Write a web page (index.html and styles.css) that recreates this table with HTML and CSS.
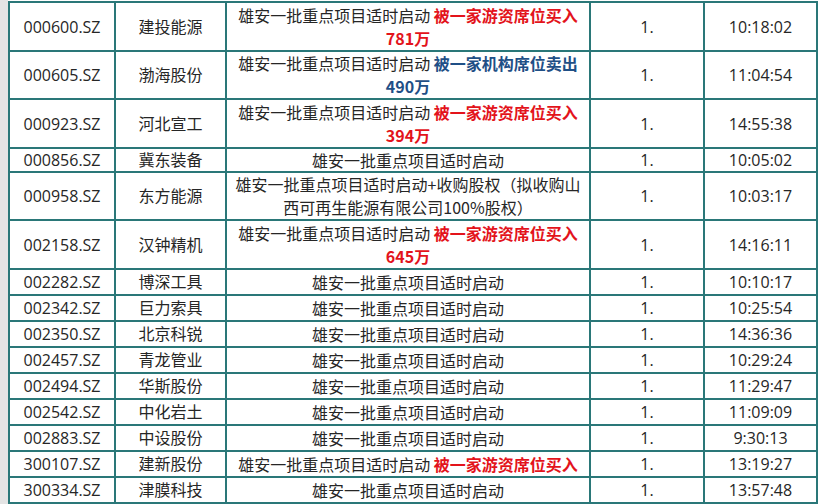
FILE: index.html
```html
<!DOCTYPE html>
<html lang="zh-CN">
<head>
<meta charset="utf-8">
<title>雄安概念股</title>
<link rel="stylesheet" href="styles.css">
</head>
<body>
<div class="page">
<table class="grid">
  <colgroup>
    <col class="c-code"><col class="c-name"><col class="c-reason"><col class="c-num"><col class="c-time">
  </colgroup>
  <tbody>
    <tr class="r2a"><td>000600.SZ</td><td>建投能源</td><td class="reason">雄安一批重点项目适时启动 <b class="buy">被一家游资席位买入</b><br><b class="buy">781万</b></td><td>1.</td><td>10:18:02</td></tr>
    <tr class="r2b"><td>000605.SZ</td><td>渤海股份</td><td class="reason">雄安一批重点项目适时启动 <b class="sell">被一家机构席位卖出</b><br><b class="sell">490万</b></td><td>1.</td><td>11:04:54</td></tr>
    <tr class="r2a"><td>000923.SZ</td><td>河北宣工</td><td class="reason">雄安一批重点项目适时启动 <b class="buy">被一家游资席位买入</b><br><b class="buy">394万</b></td><td>1.</td><td>14:55:38</td></tr>
    <tr class="r1s"><td>000856.SZ</td><td>冀东装备</td><td class="reason">雄安一批重点项目适时启动</td><td>1.</td><td>10:05:02</td></tr>
    <tr class="r2b"><td>000958.SZ</td><td>东方能源</td><td class="reason">雄安一批重点项目适时启动+收购股权（拟收购山<br>西可再生能源有限公司100%股权）</td><td>1.</td><td>10:03:17</td></tr>
    <tr class="r2a"><td>002158.SZ</td><td>汉钟精机</td><td class="reason">雄安一批重点项目适时启动 <b class="buy">被一家游资席位买入</b><br><b class="buy">645万</b></td><td>1.</td><td>14:16:11</td></tr>
    <tr class="r1"><td>002282.SZ</td><td>博深工具</td><td class="reason">雄安一批重点项目适时启动</td><td>1.</td><td>10:10:17</td></tr>
    <tr class="r1"><td>002342.SZ</td><td>巨力索具</td><td class="reason">雄安一批重点项目适时启动</td><td>1.</td><td>10:25:54</td></tr>
    <tr class="r1"><td>002350.SZ</td><td>北京科锐</td><td class="reason">雄安一批重点项目适时启动</td><td>1.</td><td>14:36:36</td></tr>
    <tr class="r1"><td>002457.SZ</td><td>青龙管业</td><td class="reason">雄安一批重点项目适时启动</td><td>1.</td><td>10:29:24</td></tr>
    <tr class="r1"><td>002494.SZ</td><td>华斯股份</td><td class="reason">雄安一批重点项目适时启动</td><td>1.</td><td>11:29:47</td></tr>
    <tr class="r1"><td>002542.SZ</td><td>中化岩土</td><td class="reason">雄安一批重点项目适时启动</td><td>1.</td><td>11:09:09</td></tr>
    <tr class="r1"><td>002883.SZ</td><td>中设股份</td><td class="reason">雄安一批重点项目适时启动</td><td>1.</td><td>9:30:13</td></tr>
    <tr class="r1"><td>300107.SZ</td><td>建新股份</td><td class="reason">雄安一批重点项目适时启动 <b class="buy">被一家游资席位买入</b></td><td>1.</td><td>13:19:27</td></tr>
    <tr class="r1"><td>300334.SZ</td><td>津膜科技</td><td class="reason">雄安一批重点项目适时启动</td><td>1.</td><td>13:57:48</td></tr>
  </tbody>
</table>
</div>
</body>
</html>
```

FILE: styles.css
```css
html, body {
  margin: 0;
  padding: 0;
  background: #ffffff;
}

.page {
  border-left: 8px solid #e4e4e4;
  padding-top: 1px;
  height: 503px;
  overflow: hidden;
  font-family: "Open Sans", "Noto Sans CJK SC", sans-serif;
  font-size: 16px;
  color: #262626;
}

.grid {
  border-collapse: collapse;
  table-layout: fixed;
  width: 810px;
}

.c-code { width: 106px; }
.c-name { width: 111px; }
.c-reason { width: 364px; }
.c-num { width: 114px; }
.c-time { width: 113px; }

.grid td {
  border: 2px solid #2a7778;
  text-align: center;
  vertical-align: middle;
  padding: 0 4px;
  line-height: 20px;
  white-space: nowrap;
  overflow: hidden;
}

.grid td.reason {
  font-family: "Noto Sans CJK SC", sans-serif;
}

.grid tr.r2a { height: 49px; }
.grid tr.r2b { height: 48px; }
.grid tr.r1s { height: 24px; }
.grid tr.r1 { height: 26px; }

.reason b {
  font-weight: 700;
  font-size: 16px;
  line-height: 20px;
  vertical-align: top;
}

.grid tr.r2a td.reason, .grid tr.r2b td.reason {
  line-height: 23px;
}

.grid tr.r2a td.reason b, .grid tr.r2b td.reason b {
  line-height: 23px;
}

.buy { color: #e3131b; }
.sell { color: #1f4f86; }
```
